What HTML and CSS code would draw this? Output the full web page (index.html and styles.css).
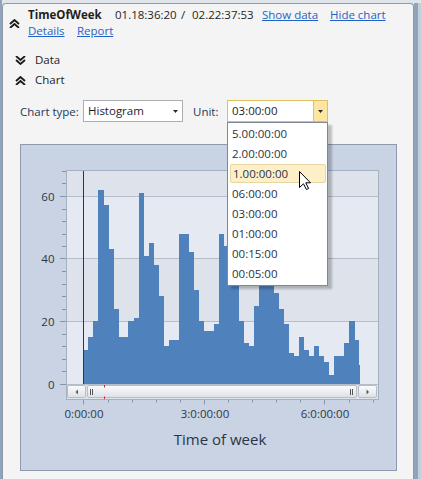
FILE: index.html
```html
<!DOCTYPE html>
<html>
<head>
<meta charset="utf-8">
<title>TimeOfWeek</title>
<link rel="stylesheet" href="styles.css">
</head>
<body>
<div class="frame">
  <div class="panel">
    <div class="header">
      <svg class="chev" viewBox="0 0 11 9"><path d="M1 5 5.5 1 10 5M1 9 5.5 5 10 9"/></svg>
      <div class="head-text">
        <div class="line1">
          <span class="title">TimeOfWeek</span>
          <span>01.18:36:20</span>
          <span>/</span>
          <span>02.22:37:53</span>
          <a class="link" href="#">Show data</a>
          <a class="link" href="#">Hide chart</a>
        </div>
        <div class="line2">
          <a class="link" href="#">Details</a>
          <a class="link" href="#">Report</a>
        </div>
      </div>
    </div>

    <div class="sections">
      <div class="section">
        <svg class="chev" viewBox="0 0 11 9"><path d="M1 0 5.5 4 10 0M1 4 5.5 8 10 4"/></svg>
        <span>Data</span>
      </div>
      <div class="section">
        <svg class="chev" viewBox="0 0 11 9"><path d="M1 5 5.5 1 10 5M1 9 5.5 5 10 9"/></svg>
        <span>Chart</span>
      </div>
    </div>

    <div class="controls">
      <span class="lbl lbl-type">Chart type:</span>
      <div class="combo combo-type">
        <span>Histogram</span>
        <svg class="arrow" viewBox="0 0 5 3"><path d="M0 0H5L2.5 3Z"/></svg>
      </div>
      <span class="lbl lbl-unit">Unit:</span>
      <div class="combo combo-unit">
        <span>03:00:00</span>
        <div class="combo-btn"><svg class="arrow" viewBox="0 0 5 3"><path d="M0 0H5L2.5 3Z"/></svg></div>
        <ul class="dropdown">
          <li>5.00:00:00</li>
          <li>2.00:00:00</li>
          <li class="selected">1.00:00:00</li>
          <li>06:00:00</li>
          <li>03:00:00</li>
          <li>01:00:00</li>
          <li>00:15:00</li>
          <li>00:05:00</li>
        </ul>
        <svg class="cursor" viewBox="0 0 12 19"><path d="M0.5 0.5V16.5L4.5 12.8 7.4 18.5 9.6 17.5 6.8 11.8H11.5Z"/></svg>
      </div>
    </div>

    <div class="chart">
      <svg class="plot" width="375" height="325" viewBox="21 145 375 325">
        <defs>
          <linearGradient id="sb" x1="0" y1="0" x2="0" y2="1">
            <stop offset="0" stop-color="#fbfcfd"/>
            <stop offset="1" stop-color="#dce0e7"/>
          </linearGradient>
        </defs>
        <rect x="66" y="170" width="312" height="26" fill="#dde2eb"/>
        <rect x="66" y="196" width="312" height="62" fill="#e5e9f1"/>
        <rect x="66" y="258" width="312" height="63" fill="#dde2eb"/>
        <rect x="66" y="321" width="312" height="63" fill="#e5e9f1"/>
        <path d="M66 196.5H378M66 258.5H378M66 321.5H378M66 384.5H378" stroke="#b5bdc9"/>

        <g class="bars" transform="translate(83.3 384) scale(5.02 -3.1333)">
          <rect x="0" width="1.03" height="11"/>
          <rect x="1" width="1.03" height="15"/>
          <rect x="2" width="1.03" height="20"/>
          <rect x="3" width="1.03" height="62"/>
          <rect x="4" width="1.03" height="57"/>
          <rect x="5" width="1.03" height="43"/>
          <rect x="6" width="1.03" height="24"/>
          <rect x="7" width="1.03" height="15"/>
          <rect x="8" width="1.03" height="15"/>
          <rect x="9" width="1.03" height="20"/>
          <rect x="10" width="1.03" height="21"/>
          <rect x="11" width="1.03" height="61"/>
          <rect x="12" width="1.03" height="41"/>
          <rect x="13" width="1.03" height="45"/>
          <rect x="14" width="1.03" height="38"/>
          <rect x="15" width="1.03" height="28"/>
          <rect x="16" width="1.03" height="12"/>
          <rect x="17" width="1.03" height="14"/>
          <rect x="18" width="1.03" height="14"/>
          <rect x="19" width="1.03" height="48"/>
          <rect x="20" width="1.03" height="48"/>
          <rect x="21" width="1.03" height="42"/>
          <rect x="22" width="1.03" height="30"/>
          <rect x="23" width="1.03" height="20"/>
          <rect x="24" width="1.03" height="17"/>
          <rect x="25" width="1.03" height="17"/>
          <rect x="26" width="1.03" height="19"/>
          <rect x="27" width="1.03" height="48"/>
          <rect x="28" width="1.03" height="44"/>
          <rect x="29" width="1.03" height="36"/>
          <rect x="30" width="1.03" height="33"/>
          <rect x="31" width="1.03" height="20"/>
          <rect x="32" width="1.03" height="13"/>
          <rect x="33" width="1.03" height="12"/>
          <rect x="34" width="1.03" height="25"/>
          <rect x="35" width="1.03" height="35"/>
          <rect x="36" width="1.03" height="40"/>
          <rect x="37" width="1.03" height="36"/>
          <rect x="38" width="1.03" height="29"/>
          <rect x="39" width="1.03" height="24"/>
          <rect x="40" width="1.03" height="19"/>
          <rect x="41" width="1.03" height="10"/>
          <rect x="42" width="1.03" height="9"/>
          <rect x="43" width="1.03" height="15"/>
          <rect x="44" width="1.03" height="11"/>
          <rect x="45" width="1.03" height="9"/>
          <rect x="46" width="1.03" height="12"/>
          <rect x="47" width="1.03" height="9"/>
          <rect x="48" width="1.03" height="7"/>
          <rect x="49" width="1.03" height="3"/>
          <rect x="50" width="1.03" height="9"/>
          <rect x="51" width="1.03" height="9"/>
          <rect x="52" width="1.03" height="13"/>
          <rect x="53" width="1.03" height="20"/>
          <rect x="54" width="1.0" height="14"/>
          <rect x="55" width="0.2" height="6"/>
        </g>

        <path d="M83.5 170V384" stroke="#b00000"/>

        <rect x="66" y="385" width="312" height="14" fill="#dfe3ea"/>
        <rect class="sbtn" x="67.5" y="385.5" width="18" height="12" rx="1.5"/>
        <rect class="sbtn" x="87.5" y="385.5" width="269" height="12" rx="1.5"/>
        <rect class="sbtn" x="358.5" y="385.5" width="18" height="12" rx="1.5"/>
        <path d="M90.5 389V395M92.5 389V395M350.5 389V395M352.5 389V395" stroke="#555"/>
        <path d="M78 389.5V394.5L75.5 392Z" fill="#5a5a5a"/>
        <path d="M366.5 389.5V394.5L369 392Z" fill="#5a5a5a"/>
        <path d="M104.5 385V387.5M104.5 396.5V399" stroke="#c83030"/>

        <rect x="66.5" y="170.5" width="312" height="229" fill="none" stroke="#a5b0c0"/>

        <path class="ticks" d="M60 384.5H66M62 371.5H66M62 359.5H66M62 346.5H66M62 334.5H66M60 321.5H66M62 309.5H66M62 296.5H66M62 284.5H66M62 271.5H66M60 258.5H66M62 246.5H66M62 234.5H66M62 221.5H66M62 209.5H66M60 196.5H66M62 183.5H66M62 171.5H66"/>
        <path class="ticks" d="M83.5 400V404.5M108.5 400V402.5M132.5 400V402.5M156.5 400V402.5M180.5 400V402.5M204.5 400V404.5M228.5 400V402.5M252.5 400V402.5M276.5 400V402.5M300.5 400V402.5M324.5 400V404.5M349.5 400V402.5M373.5 400V402.5"/>

        <text class="ylab" x="54.5" y="200.7">60</text>
        <text class="ylab" x="54.5" y="262.7">40</text>
        <text class="ylab" x="54.5" y="325.7">20</text>
        <text class="ylab" x="54.5" y="388.7">0</text>

        <text class="xlab" x="84" y="418">0:00:00</text>
        <text class="xlab" x="205" y="418">3:0:00:00</text>
        <text class="xlab" x="325" y="418">6:0:00:00</text>

        <text class="xtitle" x="220" y="445">Time of week</text>
      </svg>
    </div>
  </div>
  <div class="rail"></div>
  <div class="edge"></div>
</div>
</body>
</html>
```

FILE: styles.css
```css
* {
  box-sizing: border-box;
}

html,
body {
  margin: 0;
  padding: 0;
}

body {
  width: 421px;
  height: 479px;
  overflow: hidden;
  font-family: "Open Sans", "Noto Sans", sans-serif;
  font-size: 11.5px;
  color: #1e1e1e;
}

.frame {
  display: flex;
  height: 479px;
  padding-top: 3px;
  background: #dfe5eb;
  border-left: 2px solid #8fa4b9;
}

.panel {
  width: 412px;
  flex: none;
  background: #f4f4f4;
  border: 1px solid #8d9aab;
  border-bottom: none;
  border-radius: 4px 4px 0 0;
}

.rail {
  width: 4px;
  flex: none;
  background: #8fa4b9;
}

.edge {
  flex: 1;
  background: #c2cfdc;
}

/* header */
.header {
  display: flex;
  align-items: center;
  padding: 3px 0 0 6px;
}

.chev {
  width: 11px;
  height: 9px;
  flex: none;
}

.chev path {
  fill: none;
  stroke: #1a1a1a;
  stroke-width: 1.8;
}

.header .chev {
  margin-right: 8px;
}

.head-text {
  line-height: 16px;
}

.line1 {
  display: grid;
  grid-template-columns: 87px 66px 11px 70px 68px auto;
  white-space: nowrap;
}

.line2 {
  display: grid;
  grid-template-columns: 49px auto;
}

.title {
  font-weight: bold;
}

.link {
  color: #1f63c6;
  text-decoration: underline;
}

/* sections */
.sections {
  margin-top: 11px;
}

.section {
  display: flex;
  align-items: center;
  gap: 9px;
  height: 20px;
  padding-left: 12px;
  line-height: 20px;
}

/* controls */
.controls {
  display: flex;
  align-items: center;
  height: 22px;
  margin-top: 10px;
  padding-left: 17px;
}

.lbl {
  color: #22385a;
  flex: none;
}

.lbl-type {
  width: 63px;
}

.lbl-unit {
  width: 34px;
  margin-left: 10px;
}

.combo {
  position: relative;
  display: flex;
  align-items: center;
  flex: none;
  height: 22px;
  padding-left: 4px;
  background: #fff;
  border: 1px solid #abadb3;
  line-height: 20px;
}

.combo-type {
  width: 100px;
}

.combo-type .arrow {
  margin-left: auto;
  margin-right: 4px;
}

.arrow {
  width: 5px;
  height: 3px;
}

.arrow path {
  fill: #2a2a2a;
}

.combo-unit {
  width: 101px;
  border-color: #e2bf5e;
}

.combo-btn {
  display: flex;
  align-items: center;
  justify-content: center;
  align-self: stretch;
  width: 14px;
  margin-left: auto;
  background: #fde5a2;
  border-left: 1px solid #e2bf5e;
}

.dropdown {
  position: absolute;
  left: -1px;
  top: 21px;
  z-index: 2;
  width: 101px;
  height: 164px;
  margin: 0;
  padding: 1px;
  list-style: none;
  background: #fff;
  border: 1px solid #828790;
  box-shadow: 4px 3px 2px rgba(0, 0, 0, 0.22);
  color: #2a3244;
}

.dropdown li {
  height: 20px;
  padding-left: 3px;
  line-height: 20px;
}

.dropdown li.selected {
  margin-left: 1px;
  padding-left: 2px;
  background: #fdf0c9;
  border: 1px solid #e8d6a2;
  border-radius: 2px;
  line-height: 18px;
  height: 19px;
  margin-bottom: 1px;
}

.cursor {
  position: absolute;
  left: 71px;
  top: 70px;
  z-index: 3;
  width: 12px;
  height: 19px;
}

.cursor path {
  fill: #fff;
  stroke: #000;
  stroke-width: 1;
}

/* chart */
.chart {
  width: 377px;
  height: 327px;
  margin: 22px 0 0 17px;
  background: #c9d3e3;
  border: 1px solid #8e9bae;
}

.plot {
  display: block;
}

.bars rect {
  fill: #4f81bd;
  shape-rendering: crispEdges;
}

.sbtn {
  fill: url(#sb);
  stroke: #b6bec9;
}

.ticks {
  stroke: #8795a8;
  fill: none;
}

.ylab,
.xlab {
  font-family: "Open Sans", "Noto Sans", sans-serif;
  font-size: 11.5px;
  fill: #2e3848;
}

.ylab {
  text-anchor: end;
}

.xlab {
  text-anchor: middle;
}

.xtitle {
  font-family: "Open Sans", "Noto Sans", sans-serif;
  font-size: 15px;
  fill: #2b3547;
  text-anchor: middle;
}
```
